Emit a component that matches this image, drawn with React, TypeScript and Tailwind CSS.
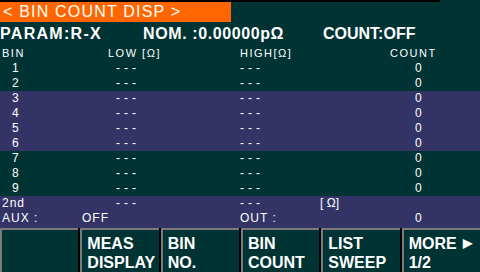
const rows = ["1", "2", "3", "4", "5", "6", "7", "8", "9"];

const rowBg = (i: number) => (i >= 2 && i <= 5 ? "bg-[#333366]" : "bg-[#003333]");

const SoftKey = ({ top, bottom, arrow }: { top?: string; bottom?: string; arrow?: boolean }) => (
  <div className="flex-1 border-t-2 border-l-2 border-[#7a7a7a] bg-[#003333] pl-[5px] pt-[4px] leading-[19px] text-[16px] font-bold text-white">
    <div className="flex items-center gap-[6px]">
      {top}
      {arrow && <span className="text-[12px]">▶</span>}
    </div>
    <div>{bottom}</div>
  </div>
);

const App = () => {
  return (
    <div
      className="w-[480px] h-[272px] bg-[#003333] text-white overflow-hidden flex flex-col"
      style={{ fontFamily: '"Liberation Sans", Arial, sans-serif' }}
    >
      <div className="h-[22px]">
        <div className="w-[440px] h-[2px] bg-black" />
        <div className="w-[231px] h-[20px] bg-[#ff6600] pl-[3px] text-[16px] leading-[20px] tracking-[1.2px]">
          &lt; BIN COUNT DISP &gt;
        </div>
      </div>

      <div className="flex h-[25px] items-center text-[16px] font-bold">
        <span className="w-[143px] tracking-[1.3px]">PARAM:R-X</span>
        <span className="w-[180px] tracking-[0.6px]">NOM. :0.00000pΩ</span>
        <span>COUNT:OFF</span>
      </div>

      <div className="grid grid-cols-[108px_132px_150px_1fr] h-[15px] text-[11px] leading-[15px] tracking-[1.5px]">
        <span className="pl-[2px]">BIN</span>
        <span>LOW [Ω]</span>
        <span>HIGH[Ω]</span>
        <span>COUNT</span>
      </div>

      {rows.map((r, i) => (
        <div
          key={r}
          className={`grid grid-cols-[108px_132px_150px_1fr] h-[15px] text-[12px] leading-[15px] ${rowBg(i)}`}
        >
          <span className="pl-[12px]">{r}</span>
          <span className="pl-[8px] tracking-[4px]">---</span>
          <span className="tracking-[4px]">---</span>
          <span className="pl-[25px]">0</span>
        </div>
      ))}

      <div className="bg-[#333366] pb-[2px]">
        <div className="grid grid-cols-[108px_132px_80px_1fr] h-[15px] text-[12px] leading-[15px]">
          <span className="pl-[2px] tracking-[1px]">2nd</span>
          <span className="pl-[8px] tracking-[4px]">---</span>
          <span className="tracking-[4px]">---</span>
          <span>[ Ω]</span>
        </div>
        <div className="grid grid-cols-[82px_158px_175px_1fr] h-[15px] text-[12px] leading-[15px] tracking-[1px]">
          <span className="pl-[2px]">AUX :</span>
          <span>OFF</span>
          <span>OUT :</span>
          <span>0</span>
        </div>
      </div>

      <div className="flex flex-1 gap-[2px] bg-black">
        <SoftKey />
        <SoftKey top="MEAS" bottom="DISPLAY" />
        <SoftKey top="BIN" bottom="NO." />
        <SoftKey top="BIN" bottom="COUNT" />
        <SoftKey top="LIST" bottom="SWEEP" />
        <SoftKey top="MORE" bottom="1/2" arrow />
      </div>
    </div>
  );
};

export default App;
